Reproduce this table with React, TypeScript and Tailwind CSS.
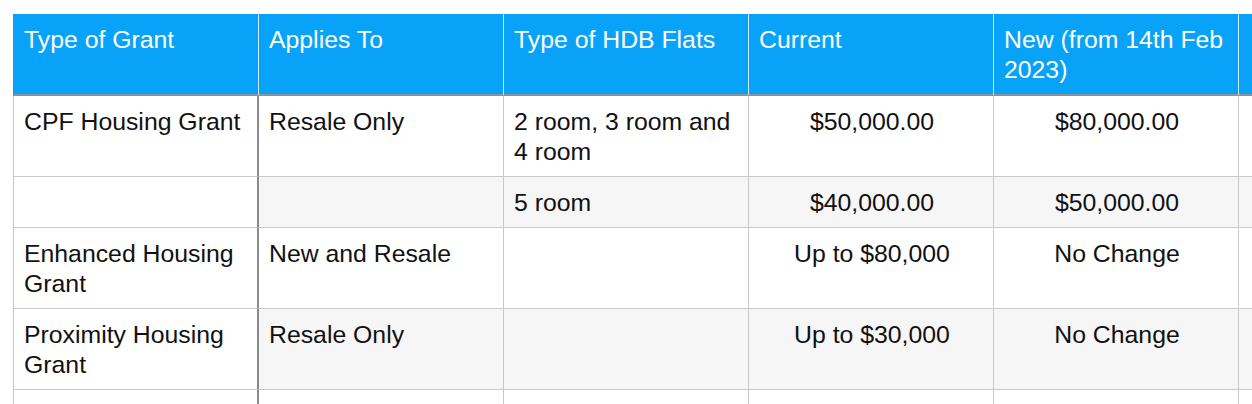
import React from "react";

const rows: { cells: string[]; tall: boolean }[] = [
  { cells: ["CPF Housing Grant", "Resale Only", "2 room, 3 room and 4 room", "$50,000.00", "$80,000.00", ""], tall: true },
  { cells: ["", "", "5 room", "$40,000.00", "$50,000.00", ""], tall: false },
  { cells: ["Enhanced Housing Grant", "New and Resale", "", "Up to $80,000", "No Change", ""], tall: true },
  { cells: ["Proximity Housing Grant", "Resale Only", "", "Up to $30,000", "No Change", ""], tall: true },
  { cells: ["", "", "", "", "", ""], tall: true },
];

const headers = ["Type of Grant", "Applies To", "Type of HDB Flats", "Current", "New (from 14th Feb 2023)", ""];

export default function App() {
  return (
    <div
      className="w-[1252px] h-[404px] overflow-hidden bg-white pt-[14px] pl-[13px]"
      style={{ fontFamily: '"Liberation Sans", Arial, sans-serif' }}
    >
      <div className="grid w-max grid-cols-[246px_245px_245px_245px_245px_245px] text-[24.8px] leading-[30px]">
        {headers.map((h, i) => (
          <div
            key={"h" + i}
            className={
              "h-[82px] bg-[#08a2f8] text-white pr-[8px] pt-[11px] border-b-2 border-b-[#8e9296] border-r border-r-[#cdeeff]" +
              (i === 0 ? " border-l border-l-[#08a2f8] pl-[10px]" : " pl-[10px]")
            }
          >
            {h}
          </div>
        ))}
        {rows.map((r, ri) =>
          r.cells.map((c, ci) => {
            const shaded = ri % 2 === 1 && ci !== 0;
            const center = ci === 3 || ci === 4;
            return (
              <div
                key={ri + "-" + ci}
                className={
                  (r.tall ? "h-[81px]" : "h-[51px]") +
                  " pl-[10px] pr-[8px] pt-[11px] text-[#111111] border-b border-b-[#c9c9c9]" +
                  (shaded ? " bg-[#f6f6f6]" : " bg-white") +
                  (ci === 0
                    ? " border-l border-l-[#c9c9c9] border-r-2 border-r-[#8a8a8a]"
                    : " border-r border-r-[#c9c9c9]") +
                  (center ? " text-center" : " text-left")
                }
              >
                {c}
              </div>
            );
          })
        )}
      </div>
    </div>
  );
}
